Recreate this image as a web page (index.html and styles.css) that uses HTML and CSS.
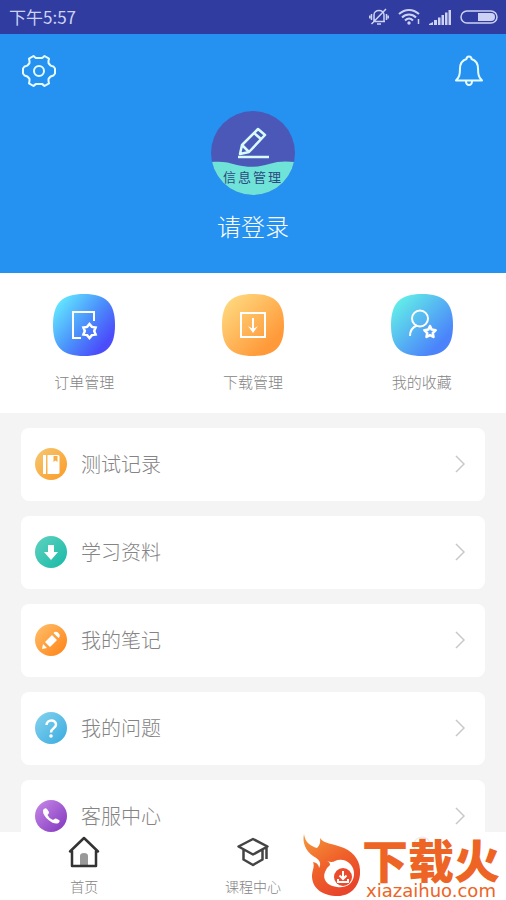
FILE: index.html
```html
<!DOCTYPE html>
<html lang="zh-CN">
<head>
<meta charset="utf-8">
<meta name="viewport" content="width=device-width, initial-scale=1">
<title>信息管理</title>
<link rel="stylesheet" href="styles.css">
</head>
<body>
<div class="app">
  <div class="status">
    <span>下午5:57</span>
    <div class="status-icons">
      <svg width="20" height="18" viewBox="0 0 20 18" fill="none" stroke="currentColor" stroke-width="1.500"><path d="M5 13V7c0-6 10-6 10 0v6M4 13.500h12M8 16h4M2.500 6v6M.8 7.500v3M17.500 6v6M19.200 7.500v3M2.500 16L17 1"/></svg>
      <svg width="22" height="18" viewBox="0 0 22 18" fill="none" stroke="currentColor" stroke-width="2"><path d="M1 6c6-5.500 14-5.500 20 0M4 9.500c4-4 10-4 14 0M7 12.500c2.500-2.500 5.500-2.500 8 0"/><circle cx="11" cy="15" r="1.700" fill="currentColor" stroke="none"/><path d="M20.500 11v5" stroke-width="1.500"/></svg>
      <svg width="22" height="16" viewBox="0 0 22 16" fill="currentColor"><path d="M0 16v-1l4-2v3zM5 11h3v5H5zM9 8.500h2.500V16H9zM12.500 6H15v10h-2.500zM16 3.500h2.500V16H16zM19.500 1H22v15h-2.500z"/></svg>
      <svg width="38" height="14" viewBox="0 0 38 14"><rect x="1" y="1" width="36" height="12" rx="6" fill="none" stroke="currentColor" stroke-width="1.500"/><path d="M18 3h13a4 4 0 0 1 0 8H18z" fill="currentColor"/></svg>
    </div>
  </div>

  <header class="hero">
    <div class="hero-bar">
      <button class="icon-button" aria-label="设置">
        <svg width="34" height="34" viewBox="0 0 34 34" fill="none" stroke="currentColor" stroke-width="2" stroke-linejoin="round"><path d="M11.500 2Q13 3.500 14 4H20Q21 3.500 22.500 2L27 4.600Q26.300 7 26.500 9Q28 12 31.500 12.500L33 14.500V19.500L31.500 21.500Q28 22 26.500 25Q26.300 27 27 29.400L22.500 32Q21 30.500 20 30H14Q13 30.500 11.500 32L7 29.400Q7.700 27 7.500 25Q6 22 2.500 21.500L1 19.500V14.500L2.500 12.500Q6 12 7.500 9Q7.700 7 7 4.600Z"/><circle cx="17" cy="17" r="5"/></svg>
      </button>
      <button class="icon-button" aria-label="消息">
        <svg width="30" height="32" viewBox="0 0 30 32" fill="none" stroke="currentColor" stroke-width="2" stroke-linejoin="round"><path d="M12.500 4a2.500 2.500 0 0 1 5 0C22 5.500 24 9 24 13.500c0 7 1 8.500 4 12H2c3-3.500 4-5 4-12 0-4.500 2-8 6.500-9.500zM12 26.500a3 3.500 0 0 0 6 0"/></svg>
      </button>
    </div>
    <div class="profile">
      <div class="avatar">
        <svg class="avatar-art" viewBox="0 0 84 84">
          <defs><clipPath id="disc"><circle cx="42" cy="42" r="42"/></clipPath></defs>
          <g clip-path="url(#disc)"><path fill="#4b58b8" d="M0 0h84v84H0z"/><path fill="#70e3d8" d="M0 51c10-1 17 0 26 3 12 3 22 2 32-1 9-3 17-3 26-2v33H0z"/></g>
          <g fill="none" stroke="#d8fbff" stroke-width="2.500" stroke-linejoin="round"><path d="M29 43l2-9 16-16 7 6-16 17zM43 22l7 6M31 34l7 7"/><path d="M27 46h31"/></g>
        </svg>
        <span class="avatar-text">信息管理</span>
      </div>
      <a class="login" href="#login">请登录</a>
    </div>
  </header>

  <nav class="shortcuts" aria-label="快捷入口">
    <a class="shortcut" href="#orders">
      <svg width="62" height="62" viewBox="0 0 62 62"><defs><linearGradient id="g1" x1="0" y1=".1" x2="1" y2=".9"><stop offset=".08" stop-color="#62e3ff"/><stop offset=".5" stop-color="#4b91fb"/><stop offset=".85" stop-color="#4b4dfb"/></linearGradient></defs><path fill="url(#g1)" d="M31 0C53 0 62 9 62 31S53 62 31 62 0 53 0 31 9 0 31 0z"/><g fill="none" stroke="#fff" stroke-width="2"><path d="M28 44h-8V18h21v9"/><path d="M36.500 30l2.400 2.900 3.700.6-1.400 3.500 1.400 3.500-3.700.6-2.400 2.900-2.400-2.900-3.700-.6 1.400-3.500-1.400-3.500 3.700-.6z" stroke-width="2.500"/></g></svg>
      <span>订单管理</span>
    </a>
    <a class="shortcut" href="#downloads">
      <svg width="62" height="62" viewBox="0 0 62 62"><defs><linearGradient id="g2" x1="0" y1="0" x2="1" y2="1"><stop offset=".1" stop-color="#ffd77d"/><stop offset=".8" stop-color="#ff9939"/></linearGradient></defs><path fill="url(#g2)" d="M31 0C53 0 62 9 62 31S53 62 31 62 0 53 0 31 9 0 31 0z"/><path fill="none" stroke="#fff" stroke-width="2" d="M19 19h24v24H19zM31 24v12"/><path fill="#fff" d="M26 32l5 3 5-3-5 7z"/></svg>
      <span>下载管理</span>
    </a>
    <a class="shortcut" href="#favorites">
      <svg width="62" height="62" viewBox="0 0 62 62"><defs><linearGradient id="g3" x1="0" y1="0" x2="1" y2="1"><stop offset=".1" stop-color="#62eee8"/><stop offset=".8" stop-color="#4b83fb"/></linearGradient></defs><path fill="url(#g3)" d="M31 0C53 0 62 9 62 31S53 62 31 62 0 53 0 31 9 0 31 0z"/><g fill="none" stroke="#fff" stroke-width="2" stroke-linejoin="round"><circle cx="29" cy="24.500" r="8"/><path d="M19 42c0-6 3-9 7-10.500"/><path stroke-width="2.500" d="M39 32l1.700 3.600 4 .6-2.900 2.800.7 4-3.500-1.900-3.500 1.900.7-4-2.900-2.800 4-.6z"/></g></svg>
      <span>我的收藏</span>
    </a>
  </nav>

  <main class="menu">
    <a class="card" href="#records">
      <svg class="badge" viewBox="0 0 32 32"><defs><linearGradient id="b1" x1="0" y1="0" x2="1" y2="1"><stop stop-color="#f6c873"/><stop offset="1" stop-color="#fb9a24"/></linearGradient></defs><circle cx="16" cy="16" r="16" fill="url(#b1)"/><path fill="#fff" d="M8 7h3v19H8zM12.500 7H23a1.500 1.500 0 0 1 1.500 1.500v16A1.500 1.500 0 0 1 23 26H12.500z"/><path fill="#f7ad48" d="M18.500 8h4v6l-2-1.500-2 1.500z"/></svg>
      <span>测试记录</span>
      <svg class="chevron" viewBox="0 0 10 18"><path d="M1 1l8 8-8 8"/></svg>
    </a>
    <a class="card" href="#materials">
      <svg class="badge" viewBox="0 0 32 32"><defs><linearGradient id="b2" x1="0" y1="0" x2="1" y2="1"><stop stop-color="#62d2c0"/><stop offset="1" stop-color="#15b9a6"/></linearGradient></defs><circle cx="16" cy="16" r="16" fill="url(#b2)"/><path fill="#fff" d="M13 9h6v7h4l-7 8-7-8h4z"/></svg>
      <span>学习资料</span>
      <svg class="chevron" viewBox="0 0 10 18"><path d="M1 1l8 8-8 8"/></svg>
    </a>
    <a class="card" href="#notes">
      <svg class="badge" viewBox="0 0 32 32"><defs><linearGradient id="b3" x1="0" y1="0" x2="1" y2="1"><stop stop-color="#ffc06c"/><stop offset="1" stop-color="#ff8113"/></linearGradient></defs><circle cx="16" cy="16" r="16" fill="url(#b3)"/><path fill="#fff" d="M7 25l1-5 4 4zM10 18l7-7 5 5-7 7zM18.500 9l1-1q2-1 4 1t1 4l-1 1z"/></svg>
      <span>我的笔记</span>
      <svg class="chevron" viewBox="0 0 10 18"><path d="M1 1l8 8-8 8"/></svg>
    </a>
    <a class="card" href="#questions">
      <svg class="badge" viewBox="0 0 32 32"><defs><linearGradient id="b4" x1="0" y1="0" x2="1" y2="1"><stop stop-color="#86d3ee"/><stop offset="1" stop-color="#38abdf"/></linearGradient></defs><circle cx="16" cy="16" r="16" fill="url(#b4)"/><path fill="none" stroke="#fff" stroke-width="2.500" d="M11.500 13c0-6 9.500-6 9.500-.5 0 4-5 3.500-5 8"/><circle cx="16" cy="24" r="1.800" fill="#fff"/></svg>
      <span>我的问题</span>
      <svg class="chevron" viewBox="0 0 10 18"><path d="M1 1l8 8-8 8"/></svg>
    </a>
    <a class="card" href="#service">
      <svg class="badge" viewBox="0 0 32 32"><defs><linearGradient id="b5" x1="0" y1="0" x2="1" y2="1"><stop stop-color="#c98ae8"/><stop offset="1" stop-color="#8035bd"/></linearGradient></defs><circle cx="16" cy="16" r="16" fill="url(#b5)"/><path fill="#fff" d="M8 10q2-3 4-1l2 3q.5 1-1.500 3 1.500 3.500 5.500 5 2-2 3-1.500l3 1.500q1.500 1-.5 3-4 2-10-3T8 10z"/></svg>
      <span>客服中心</span>
      <svg class="chevron" viewBox="0 0 10 18"><path d="M1 1l8 8-8 8"/></svg>
    </a>
  </main>

  <nav class="tabs" aria-label="主导航">
    <a class="tab" href="#home">
      <svg width="32" height="32" viewBox="0 0 32 32"><path fill="#999" d="M12 29v-9q0-3 4-3t4 3v9z"/><path fill="none" stroke="#333" stroke-width="2.500" stroke-linejoin="round" stroke-linecap="round" d="M4 15v15h24V15M2 15.500L16 2l14 13.500"/></svg>
      <span>首页</span>
    </a>
    <a class="tab" href="#courses">
      <svg width="32" height="32" viewBox="0 0 32 32" fill="none" stroke="#444" stroke-width="2.500" stroke-linejoin="round"><path d="M1.500 10.500L16 3l14.500 7.500L16 18.500zM6.500 14v9.500L16 29l9.500-5.500V14M29.500 11v12"/></svg>
      <span>课程中心</span>
    </a>
    <a class="tab" href="#me" aria-label="我的">
      <svg width="32" height="32" viewBox="0 0 32 32" fill="none" stroke="#eee" stroke-width="1.500"><circle cx="16" cy="9" r="8"/></svg>
    </a>
  </nav>

  <div class="watermark">
    <svg width="60" height="64" viewBox="0 0 60 64">
      <defs><linearGradient id="fire" x1="0" y1="0" x2=".6" y2="1"><stop stop-color="#f59a3c"/><stop offset=".55" stop-color="#f0612a"/><stop offset="1" stop-color="#e8452b"/></linearGradient></defs>
      <path fill="url(#fire)" d="M2 0C3 8 8 12 15 14Q19 10 18 4C22 10 30 9 42 14C53 19 59 28 58 40C57 53 48 62 36 62C20 62 10 54 10 42C10 36 13 33 11 28C16 29 17 32 17 34C20 29 17 25 11 22C4 17 0 9 2 0z"/>
      <path fill="#fff" d="M25 27Q30 29 33 27C42 23 53 30 52 41C51 51 43 54 35 53C25 52 20 45 23 38Q24 34 28 31Q28 28 25 27z"/>
      <circle cx="41" cy="43" r="9" fill="#ea4b2c"/><path fill="none" stroke="#fff" stroke-width="2" d="M41 37v7M37.500 41.500l3.500 3.500 3.500-3.500M36 45v3h10v-3"/>
    </svg>
    <div class="watermark-text"><strong>下载火</strong><span>xiazaihuo.com</span></div>
  </div>
</div>
</body>
</html>
```
FILE: styles.css
```css
* { box-sizing: border-box; }

body {
  margin: 0;
  font-family: "Noto Sans CJK SC", sans-serif;
  font-weight: 300;
  color: #848484;
}

a { color: inherit; text-decoration: none; }
svg { display: block; flex: none; }

.app {
  position: relative;
  display: flex;
  flex-direction: column;
  height: 100vh;
  overflow: hidden;
  background: #f4f4f4;
}

.status {
  display: flex;
  flex: none;
  align-items: center;
  justify-content: space-between;
  padding: 4px 8px 4px 9px;
  background: #303c9f;
  color: #cdd2f5;
  font-size: 17px;
  font-weight: 400;
  line-height: 26px;
}

.status-icons { display: flex; align-items: center; gap: 9px; }

.hero {
  flex: none;
  padding: 20px 22px 28px;
  background: #2592f2;
  color: #fff;
}

.hero-bar { display: flex; align-items: center; justify-content: space-between; }

.icon-button {
  padding: 0;
  border: 0;
  background: none;
  color: #e6fbff;
  cursor: pointer;
}

.profile {
  display: flex;
  flex-direction: column;
  align-items: center;
  gap: 12px;
  padding-top: 23px;
}

.avatar { position: relative; width: 84px; height: 84px; }
.avatar-art { width: 100%; height: 100%; }

.avatar-text {
  position: absolute;
  inset: 56px 0 auto;
  color: #2c4a80;
  font-size: 13px;
  font-weight: 400;
  line-height: 20px;
  letter-spacing: 2px;
  text-align: center;
}

.login { font-size: 24px; line-height: 38px; }

.shortcuts {
  display: grid;
  flex: none;
  grid-template-columns: repeat(3, 1fr);
  padding: 21px 0;
  background: #fff;
}

.shortcut {
  display: flex;
  flex-direction: column;
  align-items: center;
  gap: 16px;
  font-size: 15px;
  line-height: 20px;
}

.menu {
  display: flex;
  flex: 1;
  flex-direction: column;
  gap: 15px;
  min-height: 0;
  overflow: hidden;
  padding: 15px 21px 0;
}

.card {
  display: flex;
  flex: none;
  align-items: center;
  gap: 14px;
  padding: 20px 20px 21px 14px;
  border-radius: 8px;
  background: #fff;
  font-size: 20px;
  line-height: 32px;
}

.badge { width: 32px; height: 32px; }

.chevron {
  width: 10px;
  height: 18px;
  margin-left: auto;
  fill: none;
  stroke: #c8c8c8;
  stroke-width: 1.5;
}

.tabs {
  display: grid;
  flex: none;
  grid-template-columns: repeat(3, 1fr);
  padding: 4px 0;
  background: #fff;
}

.tab {
  display: flex;
  flex-direction: column;
  align-items: center;
  gap: 8px;
  font-size: 14px;
  line-height: 20px;
}

.watermark {
  position: absolute;
  right: 6px;
  bottom: 0;
  display: flex;
  align-items: flex-end;
  color: #ee6424;
}

.watermark svg { margin-bottom: 2px; }

.watermark-text {
  display: flex;
  flex-direction: column;
  align-items: center;
}

.watermark strong { font-size: 46px; font-weight: 900; line-height: 48px; }

.watermark span {
  font: 18px/18px "DejaVu Sans", sans-serif;
}
```
